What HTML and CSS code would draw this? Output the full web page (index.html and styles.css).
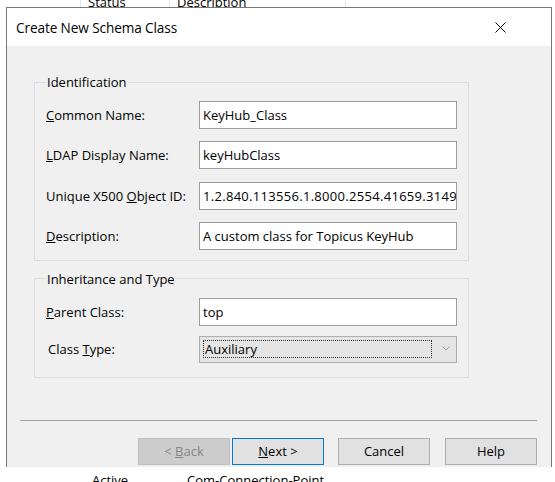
FILE: index.html
```html
<!DOCTYPE html>
<html>
<head>
<meta charset="utf-8">
<title>Create New Schema Class</title>
<link rel="stylesheet" href="styles.css">
</head>
<body>
<div class="desk">
  <div class="list-head">
    <div class="hcol"></div>
    <div class="hcol">Status</div>
    <div class="hcol">Description</div>
    <div class="hcol"></div>
  </div>
  <div class="list-row">
    <div class="rcell"></div>
    <div class="rcell">Active</div>
    <div class="rcell">Com-Connection-Point</div>
  </div>
</div>

<div class="dialog">
  <div class="titlebar">
    <span class="title">Create New Schema Class</span>
    <svg class="close" width="11" height="11" viewBox="0 0 11 11">
      <path d="M0.5 0.5 L10.5 10.5 M10.5 0.5 L0.5 10.5" stroke="#000" stroke-width="1" fill="none"/>
    </svg>
  </div>
  <div class="dlg-body">
    <fieldset class="group group-id">
      <legend>Identification</legend>
      <div class="form form-id">
        <label class="lbl"><u>C</u>ommon Name:</label>
        <div class="input">KeyHub_Class</div>
        <label class="lbl"><u>L</u>DAP Display Name:</label>
        <div class="input">keyHubClass</div>
        <label class="lbl">Unique X500 <u>O</u>bject ID:</label>
        <div class="input input-oid">1.2.840.113556.1.8000.2554.41659.31499.1</div>
        <label class="lbl"><u>D</u>escription:</label>
        <div class="input">A custom class for Topicus KeyHub</div>
      </div>
    </fieldset>

    <fieldset class="group group-inh">
      <legend>Inheritance and Type</legend>
      <div class="form form-inh">
        <label class="lbl"><u>P</u>arent Class:</label>
        <div class="input">top</div>
        <label class="lbl lbl-type">Class <u>T</u>ype:</label>
        <div class="combo">
          <span class="combo-focus">Auxiliary</span>
          <svg class="chev" width="8" height="5" viewBox="0 0 8 5">
            <path d="M0.5 0.5 L4 4 L7.5 0.5" stroke="#a0a0a0" stroke-width="1" fill="none"/>
          </svg>
        </div>
      </div>
    </fieldset>

    <div class="sep"></div>

    <div class="buttons">
      <button class="btn btn-disabled btn-back">&lt; <u>B</u>ack</button>
      <button class="btn btn-default btn-next"><u>N</u>ext &gt;</button>
      <button class="btn btn-cancel">Cancel</button>
      <button class="btn">Help</button>
    </div>
  </div>
</div>
</body>
</html>
```

FILE: styles.css
```css
html, body {
  margin: 0;
  padding: 0;
  width: 555px;
  height: 482px;
  overflow: hidden;
  background: #ffffff;
  font-family: "Open Sans", "Noto Sans", sans-serif;
  font-size: 13px;
  color: #000;
}

body {
  position: relative;
}

/* background list behind the dialog */
.desk {
  height: 482px;
  display: flex;
  flex-direction: column;
  justify-content: space-between;
}

.list-head {
  display: grid;
  grid-template-columns: 80px 89px 176px 1fr;
  height: 14px;
  margin-top: -6px;
  line-height: 16px;
}

.hcol + .hcol {
  border-left: 1px solid #e5e5e5;
  padding-left: 7px;
}

.list-row {
  display: grid;
  grid-template-columns: 92px 95px 1fr;
  height: 16px;
  line-height: 16px;
  margin-bottom: -6px;
}

/* dialog window */
.dialog {
  position: absolute;
  left: 6px;
  top: 7px;
  width: 546px;
  height: 460px;
  box-sizing: border-box;
  border: 1px solid #777777;
  border-bottom: none;
  background: #f0f0f0;
  display: flex;
  flex-direction: column;
}

.titlebar {
  height: 38px;
  flex: none;
  background: #ffffff;
  display: flex;
  align-items: center;
  justify-content: space-between;
  padding: 0 45px 0 9px;
}

.title {
  font-size: 13.6px;
  letter-spacing: -0.1px;
}

.close {
  display: block;
}

.dlg-body {
  flex: 1;
  display: flex;
  flex-direction: column;
  align-items: flex-start;
}

.group {
  margin: 0 0 0 27px;
  width: 435px;
  box-sizing: border-box;
  border: 1px solid #dcdcdc;
  padding: 0 11px 10px 11px;
  min-width: 0;
}

.group-id {
  margin-top: 28px;
}

.group-inh {
  margin-top: 10px;
  padding-bottom: 14px;
}

.group legend {
  padding: 0 1px;
  line-height: 16px;
  height: 16px;
}

.form {
  display: grid;
  grid-template-columns: 153px 258px;
  align-items: center;
  margin-top: 11px;
}

.form-id {
  grid-auto-rows: 28px;
  row-gap: 12.33px;
}

.form-inh {
  grid-template-rows: 28px 27px;
  row-gap: 10px;
}

.lbl {
  white-space: nowrap;
}

.lbl-type {
  padding-left: 2px;
}

.input {
  height: 28px;
  box-sizing: border-box;
  border: 1px solid #9c9c9c;
  background: #ffffff;
  padding: 0 3px;
  line-height: 26px;
  white-space: nowrap;
  overflow: hidden;
}

.input-oid {
  letter-spacing: 0.3px;
}

.combo {
  height: 27px;
  box-sizing: border-box;
  border: 1px solid #adadad;
  background: #e5e5e5;
  display: flex;
  align-items: flex-start;
  padding: 3px 0 0 3px;
}

.combo-focus {
  width: 229px;
  height: 18px;
  box-sizing: border-box;
  border: 1px dotted #333;
  padding-left: 1px;
  line-height: 16px;
}

.chev {
  display: block;
  margin: 6px 6px 0 auto;
}

.sep {
  margin: 42px 0 0 13px;
  width: 517px;
  height: 0;
  border-top: 1px solid #a0a0a0;
}

.buttons {
  align-self: stretch;
  display: flex;
  justify-content: flex-end;
  padding-right: 14px;
  margin-top: 17px;
}

.btn {
  width: 92px;
  height: 27px;
  box-sizing: border-box;
  border: 1px solid #adadad;
  background: #e1e1e1;
  font-family: inherit;
  font-size: 13px;
  color: #000;
  padding: 0;
  margin: 0 15px 0 0;
}

.btn:last-child {
  margin-right: 0;
}

.btn-back {
  margin-right: 2px;
}

.btn-next {
  margin-right: 14px;
}

.btn-disabled {
  background: #cccccc;
  border-color: #bfbfbf;
  color: #858585;
}

.btn-default {
  border-color: #0078d7;
}
```
